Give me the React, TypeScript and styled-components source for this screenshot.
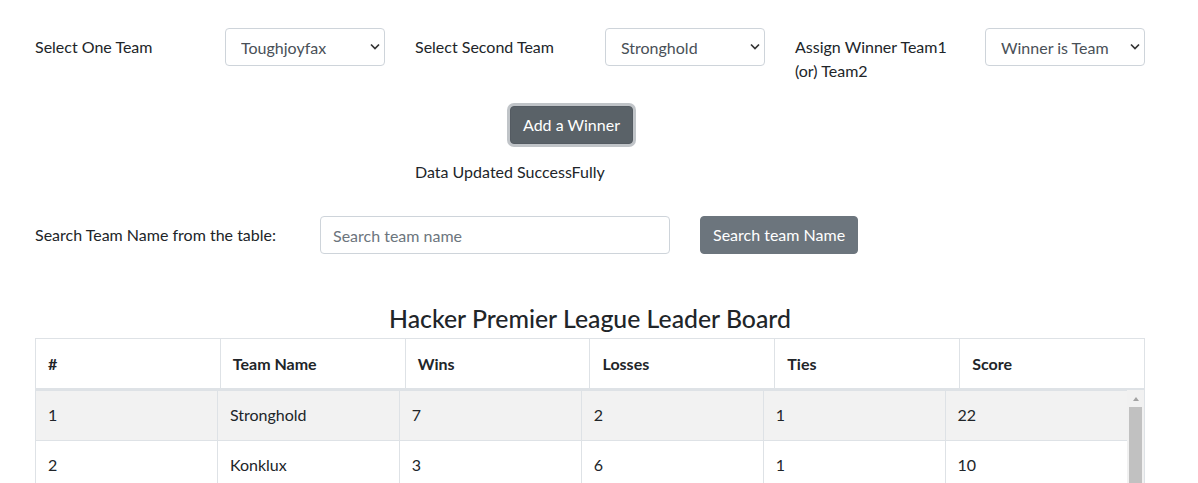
import React from "react";
import styled, { createGlobalStyle, css } from "styled-components";

const GlobalStyle = createGlobalStyle`
  html, body {
    margin: 0;
    padding: 0;
    overflow: hidden;
    background: #ffffff;
  }
  body {
    font-family: Lato, "Noto Sans", "Liberation Sans", sans-serif;
    font-size: 16px;
    line-height: 1.5;
    color: #212529;
  }
  * { box-sizing: border-box; }
`;

const Page = styled.div`
  width: 1140px;
  margin-left: 20px;
  padding-top: 28px;
  display: flex;
  flex-direction: column;
`;

const Row = styled.div<{ $mt?: number }>`
  display: grid;
  grid-template-columns: repeat(12, 95px);
  align-items: start;
  margin-top: ${(p) => p.$mt ?? 0}px;
`;

const Col = styled.div<{ $span: number; $start?: number }>`
  grid-column: ${(p) => (p.$start ? `${p.$start} / span ${p.$span}` : `span ${p.$span}`)};
  padding: 0 15px;
`;

const FormLabel = styled.label`
  display: block;
  padding: 7px 0;
  line-height: 24px;
  font-size: 16px;
  color: #212529;
`;

const SelectWrap = styled.div`
  position: relative;
  width: 100%;
`;

const Select = styled.select`
  appearance: none;
  -webkit-appearance: none;
  display: block;
  width: 100%;
  height: 38px;
  padding: 0 28px 0 15px;
  font-family: inherit;
  font-size: 16px;
  color: #495057;
  background: #ffffff;
  border: 1px solid #ced4da;
  border-radius: 4px;
  outline: none;
`;

const Chevron = styled.svg`
  position: absolute;
  right: 5px;
  top: 15px;
  width: 10px;
  height: 7px;
  pointer-events: none;
`;

const btnBase = css`
  font-family: inherit;
  font-size: 16px;
  line-height: 24px;
  color: #ffffff;
  padding: 6px 12px;
  border-radius: 4px;
  cursor: pointer;
`;

const ActiveButton = styled.button`
  ${btnBase};
  background: #5a6268;
  border: 1px solid #545b62;
  box-shadow: 0 0 0 3px rgba(130, 138, 145, 0.5);
`;

const SecondaryButton = styled.button`
  ${btnBase};
  background: #6c757d;
  border: 1px solid #6c757d;
`;

const Message = styled.p`
  margin: 0;
  line-height: 24px;
  color: #212529;
`;

const TextInput = styled.input`
  display: block;
  width: 100%;
  height: 38px;
  padding: 6px 12px;
  font-family: inherit;
  font-size: 16px;
  color: #495057;
  border: 1px solid #ced4da;
  border-radius: 4px;
  outline: none;
  &::placeholder {
    color: #6c757d;
  }
`;

const Board = styled.section`
  width: 1110px;
  margin: 50px 0 0 15px;
  display: flex;
  flex-direction: column;
`;

const Title = styled.h4`
  margin: 0 0 5px;
  font-size: 24.8px;
  font-weight: 500;
  line-height: 29px;
  text-align: center;
  color: #212529;
`;

const HeadTable = styled.table`
  width: 100%;
  border-collapse: collapse;
  table-layout: fixed;
`;

const Th = styled.th`
  text-align: left;
  font-weight: 700;
  padding: 13px 12px 12px;
  line-height: 24px;
  border: 1px solid #dee2e6;
  border-bottom: 2px solid #dee2e6;
  color: #212529;
`;

const BodyArea = styled.div`
  display: flex;
  align-items: stretch;
  border-right: 1px solid #dee2e6;
`;

const BodyPane = styled.div`
  flex: 1;
  min-width: 0;
`;

const BodyTable = styled.table`
  width: 100%;
  border-collapse: collapse;
  table-layout: fixed;
`;

const BodyRow = styled.tr<{ $striped: boolean }>`
  background: ${(p) => (p.$striped ? "#f2f2f2" : "#ffffff")};
`;

const Td = styled.td`
  padding: 12px 12px 13px;
  line-height: 24px;
  border: 1px solid #dee2e6;
  color: #212529;
  &:last-child {
    border-right: none;
  }
`;

const ScrollTrack = styled.div`
  width: 17px;
  flex: none;
  display: flex;
  flex-direction: column;
  background: #f1f1f1;
`;

const ScrollArrow = styled.div`
  height: 17px;
  flex: none;
  display: flex;
  align-items: center;
  justify-content: center;
  &::before {
    content: "";
    width: 0;
    height: 0;
    border-left: 3.5px solid transparent;
    border-right: 3.5px solid transparent;
    border-bottom: 4px solid #a3a3a3;
  }
`;

const ScrollThumb = styled.div`
  flex: 1;
  margin: 0 2px;
  background: #c1c1c1;
`;

const teams = [
  { name: "Stronghold", wins: 7, losses: 2, ties: 1, score: 22 },
  { name: "Konklux", wins: 3, losses: 6, ties: 1, score: 10 },
];

const selectTeams = ["Toughjoyfax", "Stronghold", "Konklux", "Bitwolf", "Fixflex", "Zontrax"];

const ChevronIcon = () => (
  <Chevron viewBox="0 0 10 7" aria-hidden="true">
    <polyline points="1,1.5 5,5.5 9,1.5" fill="none" stroke="#333" strokeWidth="1.7" />
  </Chevron>
);

const TeamSelect: React.FC<{ value: string; options: string[] }> = ({ value, options }) => (
  <SelectWrap>
    <Select defaultValue={value}>
      {options.map((o) => (
        <option key={o} value={o}>
          {o}
        </option>
      ))}
    </Select>
    <ChevronIcon />
  </SelectWrap>
);

export default function App() {
  return (
    <>
      <GlobalStyle />
      <Page>
        <Row>
          <Col $span={2}>
            <FormLabel>Select One Team</FormLabel>
          </Col>
          <Col $span={2}>
            <TeamSelect value="Toughjoyfax" options={selectTeams} />
          </Col>
          <Col $span={2}>
            <FormLabel>Select Second Team</FormLabel>
          </Col>
          <Col $span={2}>
            <TeamSelect value="Stronghold" options={selectTeams} />
          </Col>
          <Col $span={2}>
            <FormLabel>Assign Winner Team1 (or) Team2</FormLabel>
          </Col>
          <Col $span={2}>
            <TeamSelect value="Winner is Team" options={["Winner is Team", "Team1", "Team2"]} />
          </Col>
        </Row>

        <Row $mt={16}>
          <Col $span={3} $start={6}>
            <ActiveButton type="button">Add a Winner</ActiveButton>
          </Col>
        </Row>

        <Row $mt={16}>
          <Col $span={4} $start={5}>
            <Message>Data Updated SuccessFully</Message>
          </Col>
        </Row>

        <Row $mt={32}>
          <Col $span={3}>
            <FormLabel>Search Team Name from the table:</FormLabel>
          </Col>
          <Col $span={4}>
            <TextInput type="text" placeholder="Search team name" />
          </Col>
          <Col $span={3}>
            <SecondaryButton type="button">Search team Name</SecondaryButton>
          </Col>
        </Row>

        <Board>
          <Title>Hacker Premier League Leader Board</Title>
          <HeadTable>
            <thead>
              <tr>
                <Th>#</Th>
                <Th>Team Name</Th>
                <Th>Wins</Th>
                <Th>Losses</Th>
                <Th>Ties</Th>
                <Th>Score</Th>
              </tr>
            </thead>
          </HeadTable>
          <BodyArea>
            <BodyPane>
              <BodyTable>
                <tbody>
                  {teams.map((t, i) => (
                    <BodyRow key={t.name} $striped={i % 2 === 0}>
                      <Td>{i + 1}</Td>
                      <Td>{t.name}</Td>
                      <Td>{t.wins}</Td>
                      <Td>{t.losses}</Td>
                      <Td>{t.ties}</Td>
                      <Td>{t.score}</Td>
                    </BodyRow>
                  ))}
                </tbody>
              </BodyTable>
            </BodyPane>
            <ScrollTrack aria-hidden="true">
              <ScrollArrow />
              <ScrollThumb />
            </ScrollTrack>
          </BodyArea>
        </Board>
      </Page>
    </>
  );
}
